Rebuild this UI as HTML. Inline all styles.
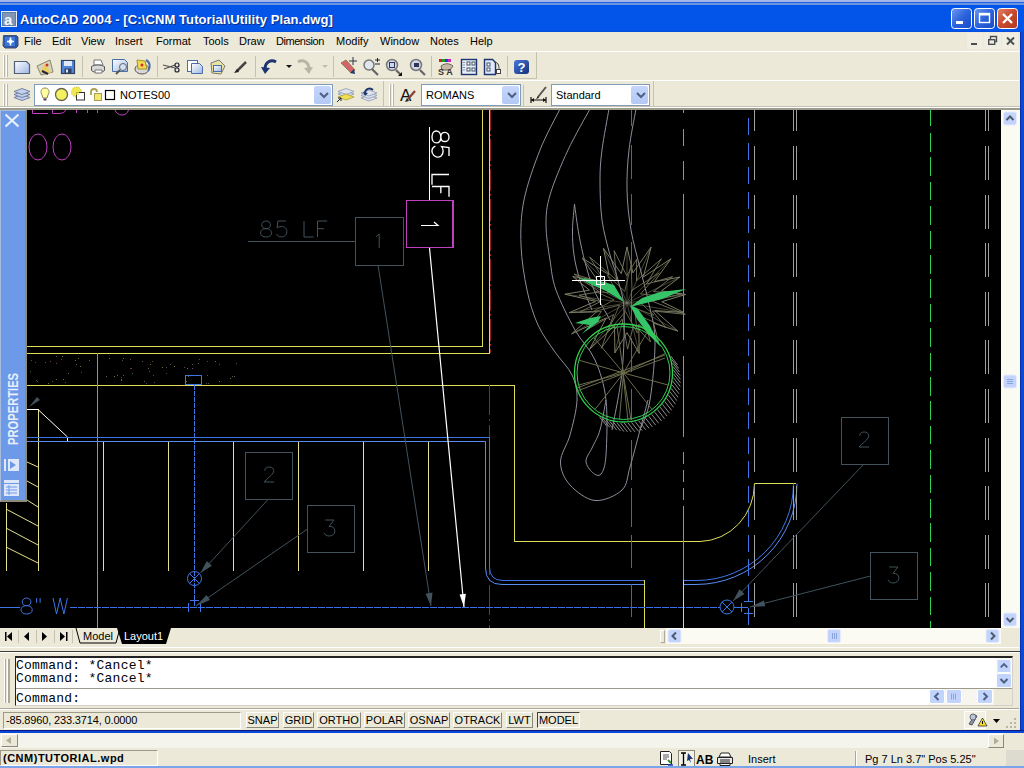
<!DOCTYPE html>
<html><head><meta charset="utf-8">
<style>
*{box-sizing:border-box;margin:0;padding:0}
html,body{width:1024px;height:768px;overflow:hidden;background:#ECE9D8;font-family:"Liberation Sans",sans-serif;font-size:11px;color:#000}
.a{position:absolute}
#title{left:0;top:0;width:1024px;height:32px;background:linear-gradient(#a3b5e8 0,#a3b5e8 2px,#1f5fe2 2px,#1f5fe2 3px,#6a96e2 3px,#6a96e2 5px,#0355ea 5px,#0355ea 31px,#0348d2 32px)}
#title .t{left:20px;top:12px;color:#fff;font-weight:bold;font-size:13px;line-height:16px;white-space:nowrap;letter-spacing:0.100px;text-shadow:1px 1px 0 #0a2a80}
#menu{left:0;top:32px;width:1019px;height:19px}
#menu span{position:absolute;top:3px;font-size:11px;line-height:13px;white-space:nowrap}
.tb{background:#ECE9D8}
.sep{position:absolute;width:1px;background:#c5c2b2;}
.combo{position:absolute;background:#fff;border:1px solid #7f9db9;font-size:11px;line-height:13px}
.combo .dd{position:absolute;right:1px;top:1px;bottom:1px;width:17px;background:linear-gradient(#c6d6fb,#b3c8f5);border-radius:2px}
#draw{left:0;top:110px;width:1001px;height:518px;background:#000}
.mono{font-family:"Liberation Mono",monospace}
.sbtn{position:absolute;top:712px;height:16px;border:1px solid;border-color:#fff #8a887a #8a887a #fff;font-size:11px;line-height:14px;text-align:center;white-space:nowrap}
</style></head><body>
<!-- TITLE BAR -->
<div id="title" class="a"><div class="a t">AutoCAD 2004 - [C:\CNM Tutorial\Utility Plan.dwg]</div></div>
<svg class="a" style="left:0;top:8px" width="20" height="42" viewBox="0 8 20 42">
<rect x="1.500" y="11.500" width="15" height="15" fill="#5f7fa8" stroke="#e8ecf4"/><rect x="3" y="13" width="12" height="12" fill="#7f96b4"/>
<text x="4" y="24.500" font-family="Liberation Sans" font-weight="bold" font-size="15" fill="#f4f6fa">a</text>
<path d="M3.500 35.500h13l1.500 1.500v9l-2 2h-11l-2-2z" fill="#2c56a8" stroke="#44506c"/><path d="M5 37h10v9h-10z" fill="#3a78d8"/>
<path d="M10.500 37.500v8M7 41.500h7" stroke="#fff" stroke-width="1.600"/><circle cx="10.500" cy="41.500" r="2" fill="#fff"/>
</svg>
<svg class="a" style="left:945px;top:4px" width="79" height="48" viewBox="945 4 79 48">
<defs><linearGradient id="gwb" x1="0" y1="0" x2="1" y2="1"><stop offset="0" stop-color="#6f9af0"/><stop offset="0.500" stop-color="#2c62dc"/><stop offset="1" stop-color="#1a4cc8"/></linearGradient>
<linearGradient id="gcl" x1="0" y1="0" x2="1" y2="1"><stop offset="0" stop-color="#e08468"/><stop offset="0.500" stop-color="#c8482c"/><stop offset="1" stop-color="#b03820"/></linearGradient></defs>
<rect x="951.500" y="8.500" width="20" height="20" rx="3" fill="url(#gwb)" stroke="#fff"/><rect x="956" y="21" width="7" height="3" fill="#fff"/>
<rect x="974.500" y="8.500" width="20" height="20" rx="3" fill="url(#gwb)" stroke="#fff"/><rect x="979.500" y="13.500" width="10" height="9" fill="none" stroke="#fff" stroke-width="1.400"/><rect x="979" y="13" width="11" height="2.500" fill="#fff"/>
<rect x="997.500" y="8.500" width="20" height="20" rx="3" fill="url(#gcl)" stroke="#fff"/><path d="M1003 14l9 9M1012 14l-9 9" stroke="#fff" stroke-width="2.400"/>
<g><rect x="967" y="33" width="16" height="16" fill="#f0eee2"/><rect x="984" y="33" width="17" height="16" fill="#f0eee2"/><rect x="1002" y="33" width="16" height="16" fill="#f0eee2"/>
<rect x="971" y="43" width="6" height="2" fill="#4a5050"/>
<path d="M990.500 39v-2.500h6v5h-2" fill="none" stroke="#4a5050" stroke-width="1.400"/><rect x="988.700" y="39.700" width="6" height="4.600" fill="none" stroke="#4a5050" stroke-width="1.400"/>
<path d="M1007 37.500l7 7M1014 37.500l-7 7" stroke="#4a5050" stroke-width="2"/></g>
</svg>
<!-- MENU -->
<div id="menu" class="a">
<span style="left:24px">File</span><span style="left:52px">Edit</span><span style="left:81px">View</span><span style="left:115px">Insert</span><span style="left:156px">Format</span><span style="left:203px">Tools</span><span style="left:239px">Draw</span><span style="left:276px;letter-spacing:-0.450px">Dimension</span><span style="left:336px">Modify</span><span style="left:380px">Window</span><span style="left:430px">Notes</span><span style="left:470px">Help</span>
</div>
<!-- TOOLBARS -->

<div class="a" style="left:0;top:51px;width:1019px;height:1px;background:#fff"></div>
<div class="a" style="left:0;top:52px;width:537px;height:27px;border-right:1px solid #c5c2b2;border-bottom:1px solid #c5c2b2;"></div>
<div class="a" style="left:3px;top:55px;width:1px;height:22px;background:#fff;box-shadow:1px 0 0 #b9b6a6, 3px 0 0 #fff, 4px 0 0 #b9b6a6"></div>
<div class="sep" style="left:82px;top:56px;height:21px"></div>
<div class="sep" style="left:157px;top:56px;height:21px"></div>
<div class="sep" style="left:255px;top:56px;height:21px"></div>
<div class="sep" style="left:333px;top:56px;height:21px"></div>
<div class="sep" style="left:431px;top:56px;height:21px"></div>
<div class="sep" style="left:507px;top:56px;height:21px"></div>
<svg class="a" style="left:0;top:52px" width="540" height="28" viewBox="0 52 540 28">
<defs>
<linearGradient id="gpaper" x1="0" y1="0" x2="1" y2="1"><stop offset="0" stop-color="#fff"/><stop offset="1" stop-color="#9db6e4"/></linearGradient>
<linearGradient id="ghelp" x1="0" y1="0" x2="1" y2="1"><stop offset="0" stop-color="#4a78d8"/><stop offset="1" stop-color="#12307a"/></linearGradient>
</defs>
<!-- new -->
<path d="M14.500 61.500h12l3 3v9h-15z" fill="url(#gpaper)" stroke="#4f6078" stroke-width="1.200"/>
<!-- open -->
<path d="M37 66l13-6 3 12-12 3z" fill="#d8d4b8" stroke="#8a866c"/><path d="M40 72l5-8 6 9z" fill="#e8d060"/><path d="M42 71l6 3" stroke="#223" stroke-width="2"/><circle cx="47" cy="65" r="1.500" fill="#d03030"/>
<!-- save -->
<rect x="61.500" y="60.500" width="13" height="13" fill="#4f86e0" stroke="#33415c" stroke-width="1.200"/><rect x="64" y="61" width="8" height="5" fill="#dfe8f8"/><rect x="64.500" y="68.500" width="7" height="5" fill="#33415c"/><rect x="66" y="69.500" width="2" height="3" fill="#dfe8f8"/>
<!-- print -->
<path d="M94 60h7l2 5h-9z" fill="#fff" stroke="#777"/><path d="M91.500 66.500c3-2 9-2 13 0v4c-4 3-9 3-13 0z" fill="#d8d8d8" stroke="#555"/><path d="M95 70h7v3h-7z" fill="#fff" stroke="#777"/>
<!-- preview -->
<path d="M112.500 59.500h12l3 3v9h-15z" fill="url(#gpaper)" stroke="#4a6ea8"/><circle cx="123" cy="67" r="3.500" fill="#cfe0f4" stroke="#666"/><path d="M120 70l-4 4" stroke="#555" stroke-width="2"/>
<!-- publish -->
<ellipse cx="142" cy="69" rx="7" ry="5" fill="#d8d8d8" stroke="#555"/><path d="M137 60l8 1 2 8-9 0z" fill="#f0dc50" stroke="#a89020"/><path d="M146 60c4 2 5 7 2 11" stroke="#4a6ea8" stroke-width="2" fill="none"/><circle cx="142" cy="65" r="1.500" fill="#d03030"/>
<!-- cut -->
<path d="M163 65l12 3M164 69l11-4" stroke="#555" stroke-width="1.200"/><circle cx="177" cy="65" r="2" fill="none" stroke="#223" stroke-width="1.200"/><circle cx="177" cy="70" r="2" fill="none" stroke="#223" stroke-width="1.200"/>
<!-- copy -->
<rect x="187.500" y="60.500" width="10" height="11" fill="#fff" stroke="#4a6ea8"/><path d="M191.500 63.500h8l3 3v7h-11z" fill="url(#gpaper)" stroke="#4a6ea8"/>
<!-- paste -->
<path d="M211 63l8-3 6 6-4 8-9-1z" fill="#e8e4a0" stroke="#777"/><rect x="213.500" y="65.500" width="8" height="6" fill="url(#gpaper)" stroke="#4a6ea8"/>
<!-- matchprop -->
<path d="M246 62l-9 9" stroke="#444" stroke-width="2.500"/><path d="M234 73l5-1-2-3z" fill="#222"/>
<!-- undo -->
<path d="M276 62c-5-3-11 0-11 7" stroke="#1c3470" stroke-width="3" fill="none"/><path d="M261 67l9 1-5 6z" fill="#1c3470"/>
<path d="M286 65h6l-3 3z" fill="#111"/>
<!-- redo -->
<path d="M298 62c5-3 11 0 11 7" stroke="#b8b5a5" stroke-width="3" fill="none"/><path d="M313 67l-9 1 5 6z" fill="#b8b5a5"/>
<path d="M322 65h6l-3 3z" fill="#c0bdad"/>
<!-- pan -->
<path d="M341 63l10 10 4-3-9-10z" fill="#d86070" stroke="#884"/><path d="M350 73l5 1-1-5z" fill="#223a70"/><path d="M349 61h8M353 57v8" stroke="#334" stroke-width="1"/>
<!-- zoom rt -->
<circle cx="369" cy="65" r="5" fill="#dfe6ee" stroke="#777" stroke-width="1.500"/><path d="M372 69l6 6" stroke="#666" stroke-width="2.200"/><path d="M375 60h5M377.500 58v4M375 64h5" stroke="#223" stroke-width="1"/>
<!-- zoom win -->
<circle cx="392" cy="65" r="5.500" fill="#cfd8ea" stroke="#777" stroke-width="1.500"/><rect x="389.500" y="62.500" width="5" height="5" fill="none" stroke="#335"/><path d="M396 70l5 5" stroke="#666" stroke-width="2.200"/><path d="M402 72v4h-4z" fill="#111"/>
<!-- zoom prev -->
<circle cx="416" cy="65" r="5.500" fill="#cfd8ea" stroke="#777" stroke-width="1.500"/><path d="M414 63h5v4h-5z" fill="#335"/><path d="M420 70l5 5" stroke="#666" stroke-width="2.200"/>
<!-- props -->
<rect x="439" y="59" width="3" height="3" fill="#d02020"/><rect x="442" y="59" width="3" height="3" fill="#20a020"/><rect x="445" y="59" width="3" height="3" fill="#2040d0"/><rect x="448" y="59" width="3" height="3" fill="#d020c0"/><path d="M441 66c4-3 8-3 12 0l-3 4-8 0z" fill="#c8b8a8" stroke="#665"/><text x="438" y="75" font-size="9" font-weight="bold" fill="#333" font-family="Liberation Sans">S A</text>
<!-- design center -->
<rect x="461.500" y="59.500" width="15" height="15" fill="#e8eef8" stroke="#1c3470" stroke-width="1.400"/><path d="M464 62v10" stroke="#1c3470" stroke-dasharray="1 1.500"/><rect x="467" y="62" width="3" height="3" fill="#fff" stroke="#456"/><rect x="472" y="62" width="3" height="3" fill="#fff" stroke="#456"/><rect x="467" y="68" width="3" height="3" fill="#fff" stroke="#456"/><rect x="472" y="68" width="3" height="3" fill="#fff" stroke="#456"/>
<!-- tool palettes -->
<path d="M484.500 59.500h8l3 3v12h-11z" fill="#dfe8f8" stroke="#1c3470" stroke-width="1.400"/><rect x="487" y="63" width="3" height="3" fill="#fff" stroke="#456"/><rect x="487" y="68" width="3" height="3" fill="#fff" stroke="#456"/><path d="M494 62c4 0 5 3 5 7" stroke="#444" fill="none"/><rect x="496.500" y="69.500" width="4" height="4" fill="#fff" stroke="#444"/>
<!-- help -->
<rect x="514" y="60" width="15" height="14" rx="3" fill="url(#ghelp)"/><text x="517.500" y="72" font-size="13" font-weight="bold" fill="#fff" font-family="Liberation Sans">?</text>
</svg>


<div class="a" style="left:0;top:80px;width:1019px;height:1px;background:#fff"></div>
<div class="a" style="left:0;top:81px;width:384px;height:27px;border-right:1px solid #c5c2b2;"></div>
<div class="a" style="left:386px;top:81px;width:268px;height:27px;border-right:1px solid #c5c2b2;"></div>
<div class="a" style="left:0;top:106px;width:1020px;height:1px;background:#c5c2b2"></div><div class="a" style="left:0;top:107px;width:1020px;height:1px;background:#fff"></div><div class="a" style="left:0;top:108px;width:1020px;height:2px;background:#9d9b8c"></div>
<div class="a" style="left:3px;top:84px;width:1px;height:22px;background:#fff;box-shadow:1px 0 0 #b9b6a6, 3px 0 0 #fff, 4px 0 0 #b9b6a6"></div>
<div class="a" style="left:389px;top:84px;width:1px;height:22px;background:#fff;box-shadow:1px 0 0 #b9b6a6, 3px 0 0 #fff, 4px 0 0 #b9b6a6"></div>
<div class="sep" style="left:523px;top:85px;height:21px"></div>
<div class="combo" style="left:34px;top:84px;width:299px;height:22px"><span class="a" style="left:85px;top:4px">NOTES00</span><div class="dd"></div></div>
<div class="combo" style="left:421px;top:84px;width:100px;height:22px"><span class="a" style="left:4px;top:4px">ROMANS</span><div class="dd"></div></div>
<div class="combo" style="left:551px;top:84px;width:99px;height:22px"><span class="a" style="left:4px;top:4px">Standard</span><div class="dd"></div></div>
<svg class="a" style="left:0;top:81px" width="660" height="28" viewBox="0 81 660 28">
<!-- layers icon -->
<g stroke="#66789c" fill="#c4d0ea" stroke-width="0.900"><path d="M14 97.500l8-3 8 3-8 3z"/><path d="M14 94.500l8-3 8 3-8 3z"/><path d="M14 91.500l8-3 8 3-8 3z"/></g>
<!-- bulb -->
<path d="M45 88c-4 0-5 4-3 7l1 3h4l1-3c2-3 1-7-3-7z" fill="#ffffa0" stroke="#888860"/><path d="M43.500 99.500h3" stroke="#445" stroke-width="2"/>
<!-- sun -->
<circle cx="61.500" cy="94.500" r="6" fill="#f4f060" stroke="#66664a" stroke-width="1.300"/>
<!-- freeze vp -->
<circle cx="76.500" cy="92" r="5" fill="#f0e850" stroke="#c8c040" stroke-dasharray="1.500 1"/><rect x="76.500" y="92.500" width="8" height="7.500" fill="#fff" stroke="#333"/><path d="M72 88h7v7h-7z" fill="#f0e850" opacity="0.700"/>
<!-- lock -->
<path d="M91 95v-3c0-4 6-4 6 0" stroke="#a8a050" stroke-width="1.800" fill="none"/><rect x="94.500" y="93.500" width="7" height="7" fill="#f0e870" stroke="#a8a050"/>
<!-- color -->
<rect x="105.500" y="90.500" width="9" height="9" fill="#fff" stroke="#000" stroke-width="1.200"/>
<!-- combo arrows -->
<g stroke="#4d6185" stroke-width="2" fill="none"><path d="M320 93l4 4 4-4"/><path d="M508 93l4 4 4-4"/><path d="M637 93l4 4 4-4"/></g>
<!-- layer btns -->
<g stroke="#8a98b0" fill="#dfe4ee" stroke-width="0.800"><path d="M338 94l8-3 8 3-8 3z"/><path d="M338 91.500l8-3 8 3-8 3z"/></g><path d="M338 97l8-3 8 3-8 3z" fill="#f0e050" stroke="#a8a040" stroke-width="0.800"/><path d="M337 102l4-4M341 98v3M341 98h-3" stroke="#223" stroke-width="1"/>
<g stroke="#8a98b0" fill="#dfe4ee" stroke-width="0.800"><path d="M361 98l8-3 8 3-8 3z"/><path d="M361 95.500l8-3 8 3-8 3z"/><path d="M361 93l8-3 8 3-8 3z"/></g><path d="M373 90c-3-3-8-1-8 3" stroke="#1c3470" stroke-width="1.800" fill="none"/><path d="M363 92l5 1-3 3z" fill="#1c3470"/>
<!-- text style -->
<text x="400" y="101" font-size="17" fill="#111" font-family="Liberation Sans">A</text><path d="M415 91l-7 8" stroke="#884030" stroke-width="2.200"/><path d="M405 102l4-1-2-3z" fill="#222"/>
<!-- dim style -->
<path d="M531 100h15M531 97v6M546 97v6" stroke="#111" stroke-width="1.200"/><path d="M531 100l3-2v4zM546 100l-3-2v4z" fill="#111"/><path d="M546 87l-8 10" stroke="#555" stroke-width="2"/><path d="M536 99l3-1-1-2z" fill="#222"/>
</svg>

<!-- DRAWING -->
<div id="draw" class="a">
<svg id="cad" width="1001" height="518" viewBox="0 110 1001 518" style="position:absolute;left:0;top:0" fill="none" stroke-width="1" shape-rendering="crispEdges">
<g stroke="#c040c0" shape-rendering="auto"><ellipse cx="38" cy="147" rx="9" ry="13"/><ellipse cx="62" cy="147" rx="9" ry="13"/>
<path d="M32.500 110V113.500H48M52.500 110V113.500H58Q65 113.500 65.500 110M76.500 110V113M87.500 110V113M97.500 110V113M115 110Q117 115 122 115Q127 115 128.500 110"/></g>
<path d="M27 346.5L482.5 346.5" stroke="#dede58" stroke-width="1" />
<path d="M482.5 109L482.5 346.5" stroke="#dede58" stroke-width="1" />
<path d="M27 353.5L489.5 353.5" stroke="#dede58" stroke-width="1" />
<path d="M489.5 109L489.5 353.5" stroke="#dede58" stroke-width="1" />
<path d="M27 385.5H514.5V541.5H700" stroke="#dede58" stroke-width="1" />
<path d="M700 541.5A56 58 0 0 0 754.5 483.500H796" stroke="#dede58" shape-rendering="auto"/>
<path d="M490.5 109L490.5 353" stroke="#902018" stroke-width="1" stroke-dasharray="22 3 2 3"/>
<path d="M489.5 385L489.5 628" stroke="#8c2820" stroke-width="1" stroke-dasharray="30 4 2 4"/>
<path d="M97.5 353L97.5 629" stroke="#30d050" stroke-width="1" />
<path d="M6.5 503L6.5 571" stroke="#e6e08c" stroke-width="1" />
<path d="M38.5 409L38.5 571" stroke="#e6e08c" stroke-width="1" />
<path d="M103.5 441L103.5 571" stroke="#e6e08c" stroke-width="1" />
<path d="M168.5 441L168.5 571" stroke="#e6e08c" stroke-width="1" />
<path d="M233.5 441L233.5 571" stroke="#e6e08c" stroke-width="1" />
<path d="M298.5 441L298.5 571" stroke="#e6e08c" stroke-width="1" />
<path d="M363.5 441L363.5 571" stroke="#e6e08c" stroke-width="1" />
<path d="M428.5 441L428.5 571" stroke="#e6e08c" stroke-width="1" />
<path d="M27 462L38 467" stroke="#e6e08c" shape-rendering="auto"/>
<path d="M27 481L38 487" stroke="#e6e08c" shape-rendering="auto"/>
<path d="M27 500L38 507" stroke="#e6e08c" shape-rendering="auto"/>
<path d="M6 509L38 526" stroke="#e6e08c" shape-rendering="auto"/>
<path d="M6 528L38 545" stroke="#e6e08c" shape-rendering="auto"/>
<path d="M6 547L38 563" stroke="#e6e08c" shape-rendering="auto"/>
<path d="M27 409.500H38L67.500 437V441" stroke="#fff" shape-rendering="auto"/>
<path d="M29 407l8-10 3 3z" fill="#41525c" stroke="none" shape-rendering="auto"/>
<g stroke="#3f76e6" shape-rendering="auto"><path d="M27 437.500H489.500V567Q489.500 580.500 503 580.500H644.500"/><path d="M27 441.500H485.500V568Q485.500 584.500 502 584.500H644.500" stroke="#5a8cf0"/>
<path d="M683 580.500H696A97 97 0 0 0 793.500 483.500"/><path d="M683 584.500H696A101 101 0 0 0 797 483.500" stroke="#5a8cf0"/></g>
<path d="M644.5 580L644.5 629" stroke="#dede58" stroke-width="1" />
<path d="M0 607.5L20 607.5" stroke="#3f76e6" stroke-width="1" />
<path d="M70 607.5L720 607.5" stroke="#3a70ea" stroke-width="1" stroke-dasharray="7 1"/>
<path d="M734 607.5L748 607.5" stroke="#3f76e6" stroke-width="1" />
<path d="M194.5 385L194.5 607" stroke="#3f76e6" stroke-width="1" stroke-dasharray="5 1"/>
<rect x="185.500" y="375.500" width="16" height="9" stroke="#3f76e6"/>
<g stroke="#3f76e6" shape-rendering="auto"><circle cx="194.5" cy="578.5" r="7"/><path d="M189.5 573.5l10 10M199.5 573.5l-10 10"/></g>
<g stroke="#3f76e6" shape-rendering="auto"><circle cx="727" cy="607" r="7"/><path d="M722 602l10 10M732 602l-10 10"/></g>
<path d="M188.500 603v9M200.500 603v9M190 600.500h9" stroke="#3f76e6" stroke-width="1" />
<path d="M741.500 603v9M744 601.500h9M744 613.500h9" stroke="#3f76e6" stroke-width="1" />
<g transform="translate(21 598)" stroke="#3f76e6" stroke-width="1" shape-rendering="auto"><path d="M0.35 0.48C0.14 0.48 0.08 0.36 0.08 0.24C0.08 0.1 0.2 0 0.35 0C0.5 0 0.62 0.1 0.62 0.24C0.62 0.36 0.56 0.48 0.35 0.48C0.1 0.48 0 0.62 0 0.75C0 0.9 0.15 1 0.35 1C0.55 1 0.7 0.9 0.7 0.75C0.7 0.62 0.6 0.48 0.35 0.48" transform="translate(0 0) scale(16)" vector-effect="non-scaling-stroke"/></g>
<g transform="translate(35 598)" stroke="#3f76e6" stroke-width="1" shape-rendering="auto"><path d="M0.1 0V0.3M0.32 0V0.3" transform="translate(0 0) scale(16)" vector-effect="non-scaling-stroke"/></g>
<g transform="translate(53 598)" stroke="#3f76e6" stroke-width="1" shape-rendering="auto"><path d="M0 0L0.22 1L0.45 0L0.68 1L0.9 0" transform="translate(0 0) scale(16)" vector-effect="non-scaling-stroke"/></g>
<path d="M683.5 109L683.5 113" stroke="#30d050" stroke-width="1" />
<path d="M683.5 129L683.5 146" stroke="#30d050" stroke-width="1" />
<path d="M683.5 161L683.5 180" stroke="#30d050" stroke-width="1" />
<path d="M683.5 194L683.5 340" stroke="#30d050" stroke-width="1" />
<path d="M683.5 356L683.5 437" stroke="#30d050" stroke-width="1" />
<path d="M683.5 437L683.5 522" stroke="#30d050" stroke-width="1" stroke-dasharray="0 15 12 6 12 6 12 6 16"/>
<path d="M683.5 522L683.5 580" stroke="#30d050" stroke-width="1" />
<path d="M683.5 580L683.5 629" stroke="#dede58" stroke-width="1" />
<path d="M631.5 109L631.5 126" stroke="#e03020" stroke-width="1" />
<path d="M631.5 145L631.5 179" stroke="#e03020" stroke-width="1" />
<path d="M631.5 194L631.5 225" stroke="#e03020" stroke-width="1" />
<path d="M631.5 242L631.5 275" stroke="#e03020" stroke-width="1" />
<path d="M631.5 290L631.5 322" stroke="#e03020" stroke-width="1" />
<path d="M631.5 338L631.5 372" stroke="#e03020" stroke-width="1" />
<path d="M631.5 389L631.5 420" stroke="#e03020" stroke-width="1" />
<path d="M631.5 440L631.5 480" stroke="#e03020" stroke-width="1" />
<path d="M631.5 488L631.5 527" stroke="#e03020" stroke-width="1" />
<path d="M631.5 535L631.5 568" stroke="#e03020" stroke-width="1" />
<path d="M631.5 584L631.5 617" stroke="#e03020" stroke-width="1" />
<path d="M748.5 118L748.5 629" stroke="#3f76e6" stroke-width="1" stroke-dasharray="17 7.500"/>
<path d="M754.5 109L754.5 131" stroke="#a0a0a0" stroke-width="1" />
<path d="M754.5 146L754.5 629" stroke="#a0a0a0" stroke-width="1" stroke-dasharray="34 14.600"/>
<path d="M793.5 109L793.5 131" stroke="#a0a0a0" stroke-width="1" />
<path d="M793.5 146L793.5 629" stroke="#a0a0a0" stroke-width="1" stroke-dasharray="34 14.600"/>
<path d="M796.5 109L796.5 131" stroke="#a0a0a0" stroke-width="1" />
<path d="M796.5 146L796.5 629" stroke="#a0a0a0" stroke-width="1" stroke-dasharray="34 14.600"/>
<path d="M985.5 109L985.5 131" stroke="#a0a0a0" stroke-width="1" />
<path d="M985.5 146L985.5 629" stroke="#a0a0a0" stroke-width="1" stroke-dasharray="34 14.600"/>
<path d="M988.5 109L988.5 131" stroke="#a0a0a0" stroke-width="1" />
<path d="M988.5 146L988.5 629" stroke="#a0a0a0" stroke-width="1" stroke-dasharray="34 14.600"/>
<path d="M930.5 109L930.5 126" stroke="#30d050" stroke-width="1" />
<path d="M930.5 133L930.5 629" stroke="#30d050" stroke-width="1" stroke-dasharray="18.500 5.900"/>
<path d="M560 109C556.7 115.8 546 134.8 540 150C534 165.2 527.2 184.2 524 200C520.8 215.8 520.5 230 521 245C521.5 260 524.2 276.7 527 290C529.8 303.3 533.3 314.7 538 325C542.7 335.3 549.3 343.7 555 352C560.7 360.3 568.3 367 572 375C575.7 383 577.3 390 577 400C576.7 410 572.8 424.7 570 435C567.2 445.3 560.5 453.7 560.5 462C560.5 470.3 564.2 478.6 570 485C575.8 491.4 586.3 499.7 595 500.5C603.7 501.3 616.2 495.6 622 490C627.8 484.4 627 477 630 467C633 457 637 441.2 640 430C643 418.8 646.7 405 648 400" stroke="#8e8e9c" stroke-width="1" shape-rendering="auto"/>
<path d="M590 109C586.3 115.8 574.7 135.7 568 150C561.3 164.3 553.7 182.5 550 195C546.3 207.5 546 214.2 546 225C546 235.8 548.3 249.2 550 260C551.7 270.8 551.8 278.3 556 290C560.2 301.7 568.5 318.3 575 330C581.5 341.7 589.8 348.3 595 360C600.2 371.7 604.2 384.2 606 400C607.8 415.8 606.8 442.7 606 455C605.2 467.3 603.2 471.1 601 474C598.8 476.9 595 474.7 592.5 472.5C590 470.3 586 465.2 586 461C586 456.8 590.2 452.2 592.5 447C594.8 441.8 597.8 437.8 600 430C602.2 422.2 605 405 606 400" stroke="#8e8e9c" stroke-width="1" shape-rendering="auto"/>
<path d="M609 109C607.8 115.8 603.5 138.2 602 150C600.5 161.8 600 168.3 600 180C600 191.7 600.3 207.5 602 220C603.7 232.5 607.3 245 610 255C612.7 265 615.7 270.8 618 280C620.3 289.2 623.3 294.7 624 310C624.7 325.3 624 352 622 372C620 392 613.7 420.3 612 430" stroke="#8e8e9c" stroke-width="1" shape-rendering="auto"/>
<path d="M636 109C634.8 115.8 630.5 136.5 629 150C627.5 163.5 626.7 176.7 627 190C627.3 203.3 628.8 217 631 230C633.2 243 637.2 256.3 640 268C642.8 279.7 645.5 288 648 300C650.5 312 654.7 323.3 655 340C655.3 356.7 652.5 385 650 400C647.5 415 641.7 425 640 430" stroke="#8e8e9c" stroke-width="1" shape-rendering="auto"/>
<path d="M574.5 204C574.2 208.3 572.6 221.5 572.5 230C572.4 238.5 572.8 246.7 574 255C575.2 263.3 577 270.8 580 280C583 289.2 590 305 592 310" stroke="#8e8e9c" stroke-width="1" shape-rendering="auto"/>
<path d="M574.5 204C575.2 209.2 577.2 225.3 579 235C580.8 244.7 582.5 252.8 585 262C587.5 271.2 589.8 280.3 594 290C598.2 299.7 607.3 315 610 320" stroke="#8e8e9c" stroke-width="1" shape-rendering="auto"/>
<path d="M627 246.9L632.9 272.9L651.1 247.1L643.3 277L671 258.8L654.3 281.8L679.9 277.1L661.4 290.9L685.6 294.5L661.8 301.7L684 312.5L654.9 310.6L677.9 331.1L653.4 323.1L658.5 341.5L638.8 324.4L639.2 353.4L627 332.7L614.9 352.9L614.5 325.8L589.6 349.3L606.3 317.9L571.6 333.9L597.1 311.4L569.1 312.7L595.6 301.4L564.9 294.2L589.4 290.1L572.7 276.5L597.9 280.7L582.1 258L609 274.7L603.4 248.2L621.3 273.7Z" stroke="#7c7c64" shape-rendering="auto" opacity="1"/>
<path d="M627 303L627 246.9M627 303L651.1 247.1M627 303L671 258.8M627 303L679.9 277.1M627 303L685.6 294.5M627 303L684 312.5M627 303L677.9 331.1M627 303L658.5 341.5M627 303L639.2 353.4M627 303L614.9 352.9M627 303L589.6 349.3M627 303L571.6 333.9M627 303L569.1 312.7M627 303L564.9 294.2M627 303L572.7 276.5M627 303L582.1 258M627 303L603.4 248.2" stroke="#7c7c64" shape-rendering="auto" opacity="0.550"/>
<path d="M636.6 259.3L636.5 280.8L661.4 258.8L646.3 284.2L672.6 276.6L653.5 291.6L682 293.7L651.7 301L685.4 314.3L652.4 310.9L665.8 327.5L643.6 317.6L650.5 341.9L633.7 324.3L627.6 349.1L622.1 319.2L601.3 348.3L613.7 314.5L586.7 329.8L601.4 311.6L579.5 312.3L600.3 301.6L579 295.2L599.5 291.8L574.1 274.1L606.2 283.7L589.7 257.1L616.6 280.1L614.1 250.6L626.7 275.7Z" stroke="#7c7c64" shape-rendering="auto" opacity="0.85"/>
<path d="M631.1 264.9L632 290.3L659.3 272.8L640.5 293.9L666.5 296.5L639.5 301.9L654 315.2L634.4 308.1L637.4 333.1L625.5 311.5L607.5 332.7L619.5 305.1L592.1 312.1L614.1 299.8L595.5 291.6L617.6 293.3L607.3 274.9L624.7 291.4Z" stroke="#6c6c4c" shape-rendering="auto" opacity="0.9"/>
<path d="M579 278L600 281L614 285L624 302L606 291L592 285Z" fill="#36c468" stroke="none" shape-rendering="auto"/>
<path d="M630 307L642 298L660 292L686 289L662 299L646 303Z" fill="#36c468" stroke="none" shape-rendering="auto"/>
<path d="M630 305L638 309L650 326L661 347L648 334L637 319Z" fill="#36c468" stroke="none" shape-rendering="auto"/>
<path d="M575 323L590 318L601 316L598 322L582 334L590 325Z" fill="#36c468" stroke="none" shape-rendering="auto"/>
<g stroke="#30d050" shape-rendering="auto"><circle cx="623.5" cy="373" r="49" stroke-width="1.300"/><circle cx="623.5" cy="373" r="46.500"/></g>
<path d="M623.5 373L668.9 385.2" stroke="#6c6c4c" shape-rendering="auto"/>
<path d="M623.5 373L652.4 410" stroke="#6c6c4c" shape-rendering="auto"/>
<path d="M623.5 373L619.4 419.8" stroke="#6c6c4c" shape-rendering="auto"/>
<path d="M623.5 373L594.6 410" stroke="#6c6c4c" shape-rendering="auto"/>
<path d="M623.5 373L578.1 385.2" stroke="#6c6c4c" shape-rendering="auto"/>
<path d="M623.5 373L578.3 360" stroke="#6c6c4c" shape-rendering="auto"/>
<path d="M623.5 373L593.3 337" stroke="#6c6c4c" shape-rendering="auto"/>
<path d="M623.5 373L617 326.5" stroke="#6c6c4c" shape-rendering="auto"/>
<path d="M623.5 373L647 332.3" stroke="#6c6c4c" shape-rendering="auto"/>
<path d="M623.5 373L666.1 353.1" stroke="#6c6c4c" shape-rendering="auto"/>
<path d="M577 388L665 355M577 391L665 358" stroke="#6c6c4c" shape-rendering="auto"/>
<path d="M623 373L631 420M623 373L628 421" stroke="#6c6c4c" shape-rendering="auto"/>
<path d="M670.5 355.9L677.5 364.9" stroke="#8a8a8a" shape-rendering="auto"/>
<path d="M671.6 359.4L678.6 368.4" stroke="#8a8a8a" shape-rendering="auto"/>
<path d="M672.5 362.9L679.5 371.9" stroke="#8a8a8a" shape-rendering="auto"/>
<path d="M673.1 366.6L680.1 375.6" stroke="#8a8a8a" shape-rendering="auto"/>
<path d="M673.4 370.2L680.4 379.2" stroke="#8a8a8a" shape-rendering="auto"/>
<path d="M673.5 373.9L680.5 382.9" stroke="#8a8a8a" shape-rendering="auto"/>
<path d="M673.3 377.5L680.3 386.5" stroke="#8a8a8a" shape-rendering="auto"/>
<path d="M672.8 381.2L679.8 390.2" stroke="#8a8a8a" shape-rendering="auto"/>
<path d="M672.1 384.8L679.1 393.8" stroke="#8a8a8a" shape-rendering="auto"/>
<path d="M671.1 388.3L678.1 397.3" stroke="#8a8a8a" shape-rendering="auto"/>
<path d="M669.9 391.7L676.9 400.7" stroke="#8a8a8a" shape-rendering="auto"/>
<path d="M668.4 395.1L675.4 404.1" stroke="#8a8a8a" shape-rendering="auto"/>
<path d="M666.6 398.3L673.6 407.3" stroke="#8a8a8a" shape-rendering="auto"/>
<path d="M664.7 401.4L671.7 410.4" stroke="#8a8a8a" shape-rendering="auto"/>
<path d="M662.5 404.3L669.5 413.3" stroke="#8a8a8a" shape-rendering="auto"/>
<path d="M660.1 407.1L667.1 416.1" stroke="#8a8a8a" shape-rendering="auto"/>
<path d="M657.5 409.7L664.5 418.7" stroke="#8a8a8a" shape-rendering="auto"/>
<path d="M654.7 412.1L661.7 421.1" stroke="#8a8a8a" shape-rendering="auto"/>
<path d="M651.7 414.3L658.7 423.3" stroke="#8a8a8a" shape-rendering="auto"/>
<path d="M648.7 416.2L655.7 425.2" stroke="#8a8a8a" shape-rendering="auto"/>
<path d="M645.4 417.9L652.4 426.9" stroke="#8a8a8a" shape-rendering="auto"/>
<path d="M642.1 419.4L649.1 428.4" stroke="#8a8a8a" shape-rendering="auto"/>
<path d="M638.6 420.7L645.6 429.7" stroke="#8a8a8a" shape-rendering="auto"/>
<path d="M635.1 421.6L642.1 430.6" stroke="#8a8a8a" shape-rendering="auto"/>
<path d="M631.5 422.4L638.5 431.4" stroke="#8a8a8a" shape-rendering="auto"/>
<path d="M627.9 422.8L634.9 431.8" stroke="#8a8a8a" shape-rendering="auto"/>
<path d="M624.2 423L631.2 432" stroke="#8a8a8a" shape-rendering="auto"/>
<path d="M620.5 422.9L627.5 431.9" stroke="#8a8a8a" shape-rendering="auto"/>
<path d="M616.9 422.6L623.9 431.6" stroke="#8a8a8a" shape-rendering="auto"/>
<path d="M613.3 421.9L620.3 430.9" stroke="#8a8a8a" shape-rendering="auto"/>
<path d="M609.7 421.1L616.7 430.1" stroke="#8a8a8a" shape-rendering="auto"/>
<path d="M606.2 419.9L613.2 428.9" stroke="#8a8a8a" shape-rendering="auto"/>
<path d="M602.8 418.5L609.8 427.5" stroke="#8a8a8a" shape-rendering="auto"/>
<path d="M599.6 416.9L606.6 425.9" stroke="#8a8a8a" shape-rendering="auto"/>
<rect x="355.5" y="217.5" width="47.5" height="47.5" stroke="#41525c" stroke-width="1"/>
<g transform="translate(375 234)" stroke="#41525c" stroke-width="1" shape-rendering="auto"><path d="M0.08 0.2L0.3 0V1" transform="translate(0 0) scale(14)" vector-effect="non-scaling-stroke"/></g>
<rect x="245.5" y="452.5" width="47" height="47" stroke="#41525c" stroke-width="1"/>
<g transform="translate(264 467)" stroke="#41525c" stroke-width="1" shape-rendering="auto"><path d="M0.05 0.25C0.05 0.05 0.2 0 0.35 0C0.55 0 0.65 0.12 0.65 0.25C0.65 0.45 0.4 0.6 0 1H0.68" transform="translate(0 0) scale(15)" vector-effect="non-scaling-stroke"/></g>
<rect x="307.5" y="505.5" width="47" height="47" stroke="#41525c" stroke-width="1"/>
<g transform="translate(324 520)" stroke="#41525c" stroke-width="1" shape-rendering="auto"><path d="M0.08 0H0.62L0.32 0.4C0.55 0.38 0.68 0.52 0.68 0.7C0.68 0.9 0.5 1 0.33 1C0.18 1 0.05 0.93 0 0.8" transform="translate(0 0) scale(16)" vector-effect="non-scaling-stroke"/></g>
<rect x="841.5" y="417.5" width="47" height="47" stroke="#41525c" stroke-width="1"/>
<g transform="translate(859 432)" stroke="#41525c" stroke-width="1" shape-rendering="auto"><path d="M0.05 0.25C0.05 0.05 0.2 0 0.35 0C0.55 0 0.65 0.12 0.65 0.25C0.65 0.45 0.4 0.6 0 1H0.68" transform="translate(0 0) scale(15)" vector-effect="non-scaling-stroke"/></g>
<rect x="870.5" y="552.5" width="47" height="47" stroke="#41525c" stroke-width="1"/>
<g transform="translate(888 567)" stroke="#41525c" stroke-width="1" shape-rendering="auto"><path d="M0.08 0H0.62L0.32 0.4C0.55 0.38 0.68 0.52 0.68 0.7C0.68 0.9 0.5 1 0.33 1C0.18 1 0.05 0.93 0 0.8" transform="translate(0 0) scale(16)" vector-effect="non-scaling-stroke"/></g>
<path d="M247.5 241.5L355 241.5" stroke="#41525c" stroke-width="1" />
<g transform="translate(260.5 221)" stroke="#41525c" stroke-width="1" shape-rendering="auto"><path d="M0.35 0.48C0.14 0.48 0.08 0.36 0.08 0.24C0.08 0.1 0.2 0 0.35 0C0.5 0 0.62 0.1 0.62 0.24C0.62 0.36 0.56 0.48 0.35 0.48C0.1 0.48 0 0.62 0 0.75C0 0.9 0.15 1 0.35 1C0.55 1 0.7 0.9 0.7 0.75C0.7 0.62 0.6 0.48 0.35 0.48" transform="translate(0 0) scale(16)" vector-effect="non-scaling-stroke"/><path d="M0.62 0H0.12L0.07 0.43C0.2 0.33 0.45 0.3 0.6 0.45C0.75 0.62 0.68 0.9 0.45 0.98C0.28 1.03 0.1 0.97 0.03 0.8" transform="translate(15.5 0) scale(16)" vector-effect="non-scaling-stroke"/></g>
<g transform="translate(304 221)" stroke="#41525c" stroke-width="1" shape-rendering="auto"><path d="M0 0V1H0.6" transform="translate(0 0) scale(16)" vector-effect="non-scaling-stroke"/><path d="M0 1V0H0.6M0 0.48H0.4" transform="translate(13.5 0) scale(16)" vector-effect="non-scaling-stroke"/></g>
<path d="M378 265L431 606" stroke="#41525c" stroke-width="1" shape-rendering="auto"/>
<path d="M431 606L425.5 593.7L432.5 592.6Z" fill="#41525c" stroke="none" shape-rendering="auto"/>
<path d="M268 499.5L200.5 573" stroke="#41525c" stroke-width="1" shape-rendering="auto"/>
<path d="M200.5 573L206.7 561.1L211.9 565.8Z" fill="#41525c" stroke="none" shape-rendering="auto"/>
<path d="M307.5 529L196 606" stroke="#41525c" stroke-width="1" shape-rendering="auto"/>
<path d="M196 606L206.6 595L210 599.9Z" fill="#41525c" stroke="none" shape-rendering="auto"/>
<path d="M864 464L733 601" stroke="#41525c" stroke-width="1" shape-rendering="auto"/>
<path d="M733 601L739.5 589.2L744.5 594Z" fill="#41525c" stroke="none" shape-rendering="auto"/>
<path d="M870.5 576L750 607" stroke="#41525c" stroke-width="1" shape-rendering="auto"/>
<path d="M750 607L763.8 600.4L765.3 606.2Z" fill="#41525c" stroke="none" shape-rendering="auto"/>
<rect x="406.500" y="200.500" width="46.500" height="47" stroke="#c040c0" stroke-width="1.300"/>
<path d="M429.5 127L429.5 200" stroke="#fff" stroke-width="1" />
<path d="M429.5 248L464 607" stroke="#fff" stroke-width="1.2" shape-rendering="auto"/>
<path d="M464 607L459.6 594.4L465.9 593.8Z" fill="#fff" stroke="none" shape-rendering="auto"/>
<g transform="translate(432 131) rotate(90) translate(0 -17)" stroke="#fff" shape-rendering="auto">
<path d="M0.35 0.48C0.14 0.48 0.08 0.36 0.08 0.24C0.08 0.1 0.2 0 0.35 0C0.5 0 0.62 0.1 0.62 0.24C0.62 0.36 0.56 0.48 0.35 0.48C0.1 0.48 0 0.62 0 0.75C0 0.9 0.15 1 0.35 1C0.55 1 0.7 0.9 0.7 0.75C0.7 0.62 0.6 0.48 0.35 0.48" transform="translate(0 0) scale(17 17)" vector-effect="non-scaling-stroke" stroke-width="1.350"/>
<path d="M0.62 0H0.12L0.07 0.43C0.2 0.33 0.45 0.3 0.6 0.45C0.75 0.62 0.68 0.9 0.45 0.98C0.28 1.03 0.1 0.97 0.03 0.8" transform="translate(14.5 0) scale(17 17)" vector-effect="non-scaling-stroke" stroke-width="1.350"/>
<path d="M0 0V1H0.6" transform="translate(43.5 0) scale(17 17)" vector-effect="non-scaling-stroke" stroke-width="1.350"/>
<path d="M0 1V0H0.6M0 0.48H0.4" transform="translate(55.5 0) scale(17 17)" vector-effect="non-scaling-stroke" stroke-width="1.350"/>
</g>
<path d="M421 225.500H438L434 222" stroke="#fff" stroke-width="1.200" shape-rendering="auto"/>
<path d="M572 280.5L625 280.5" stroke="#fff" stroke-width="1" />
<path d="M600.5 256L600.5 305" stroke="#fff" stroke-width="1" />
<rect x="596.500" y="276.500" width="8" height="8" stroke="#fff"/>
<rect x="45" y="362" width="1" height="1" fill="#406040" stroke="none"/>
<rect x="63" y="379" width="1" height="1" fill="#707040" stroke="none"/>
<rect x="131" y="368" width="1" height="1" fill="#704040" stroke="none"/>
<rect x="50" y="361" width="1" height="1" fill="#704040" stroke="none"/>
<rect x="132" y="373" width="1" height="1" fill="#406040" stroke="none"/>
<rect x="65" y="382" width="1" height="1" fill="#704040" stroke="none"/>
<rect x="170" y="364" width="1" height="1" fill="#704040" stroke="none"/>
<rect x="121" y="377" width="1" height="1" fill="#704040" stroke="none"/>
<rect x="89" y="360" width="1" height="1" fill="#705070" stroke="none"/>
<rect x="75" y="360" width="1" height="1" fill="#707040" stroke="none"/>
<rect x="198" y="363" width="1" height="1" fill="#705070" stroke="none"/>
<rect x="154" y="382" width="1" height="1" fill="#404870" stroke="none"/>
<rect x="76" y="364" width="1" height="1" fill="#406040" stroke="none"/>
<rect x="31" y="360" width="1" height="1" fill="#704040" stroke="none"/>
<rect x="166" y="367" width="1" height="1" fill="#404870" stroke="none"/>
<rect x="174" y="366" width="1" height="1" fill="#707040" stroke="none"/>
<rect x="206" y="383" width="1" height="1" fill="#404870" stroke="none"/>
<rect x="188" y="376" width="1" height="1" fill="#705070" stroke="none"/>
<rect x="146" y="383" width="1" height="1" fill="#404870" stroke="none"/>
<rect x="130" y="368" width="1" height="1" fill="#704040" stroke="none"/>
<rect x="130" y="359" width="1" height="1" fill="#704040" stroke="none"/>
<rect x="192" y="368" width="1" height="1" fill="#705070" stroke="none"/>
<rect x="78" y="358" width="1" height="1" fill="#707040" stroke="none"/>
<rect x="142" y="361" width="1" height="1" fill="#705070" stroke="none"/>
<rect x="117" y="375" width="1" height="1" fill="#705070" stroke="none"/>
<rect x="56" y="356" width="1" height="1" fill="#404870" stroke="none"/>
<rect x="68" y="373" width="1" height="1" fill="#705070" stroke="none"/>
<rect x="123" y="375" width="1" height="1" fill="#705070" stroke="none"/>
<rect x="48" y="383" width="1" height="1" fill="#707040" stroke="none"/>
<rect x="187" y="368" width="1" height="1" fill="#707040" stroke="none"/>
<rect x="192" y="364" width="1" height="1" fill="#406040" stroke="none"/>
<rect x="184" y="367" width="1" height="1" fill="#704040" stroke="none"/>
<rect x="61" y="359" width="1" height="1" fill="#704040" stroke="none"/>
<rect x="149" y="371" width="1" height="1" fill="#704040" stroke="none"/>
<rect x="109" y="358" width="1" height="1" fill="#707040" stroke="none"/>
<rect x="56" y="379" width="1" height="1" fill="#406040" stroke="none"/>
<rect x="219" y="364" width="1" height="1" fill="#704040" stroke="none"/>
<rect x="207" y="361" width="1" height="1" fill="#404870" stroke="none"/>
<rect x="35" y="362" width="1" height="1" fill="#404870" stroke="none"/>
<rect x="122" y="360" width="1" height="1" fill="#404870" stroke="none"/>
<rect x="36" y="380" width="1" height="1" fill="#404870" stroke="none"/>
<rect x="106" y="376" width="1" height="1" fill="#705070" stroke="none"/>
<rect x="208" y="383" width="1" height="1" fill="#406040" stroke="none"/>
<rect x="162" y="367" width="1" height="1" fill="#707040" stroke="none"/>
<rect x="121" y="380" width="1" height="1" fill="#707040" stroke="none"/>
<rect x="166" y="373" width="1" height="1" fill="#404870" stroke="none"/>
<rect x="114" y="376" width="1" height="1" fill="#707040" stroke="none"/>
<rect x="186" y="381" width="1" height="1" fill="#707040" stroke="none"/>
<rect x="236" y="363" width="1" height="1" fill="#704040" stroke="none"/>
<rect x="219" y="381" width="1" height="1" fill="#707040" stroke="none"/>
<rect x="81" y="372" width="1" height="1" fill="#704040" stroke="none"/>
<rect x="121" y="379" width="1" height="1" fill="#705070" stroke="none"/>
<rect x="37" y="381" width="1" height="1" fill="#406040" stroke="none"/>
<rect x="150" y="364" width="1" height="1" fill="#707040" stroke="none"/>
<rect x="207" y="375" width="1" height="1" fill="#406040" stroke="none"/>
<rect x="144" y="381" width="1" height="1" fill="#406040" stroke="none"/>
<rect x="123" y="358" width="1" height="1" fill="#707040" stroke="none"/>
<rect x="56" y="363" width="1" height="1" fill="#704040" stroke="none"/>
<rect x="80" y="366" width="1" height="1" fill="#707040" stroke="none"/>
<rect x="153" y="375" width="1" height="1" fill="#404870" stroke="none"/>
<rect x="30" y="371" width="1" height="1" fill="#406040" stroke="none"/>
<rect x="234" y="376" width="1" height="1" fill="#705070" stroke="none"/>
<rect x="199" y="359" width="1" height="1" fill="#704040" stroke="none"/>
<rect x="230" y="378" width="1" height="1" fill="#707040" stroke="none"/>
<rect x="152" y="361" width="1" height="1" fill="#704040" stroke="none"/>
<rect x="232" y="376" width="1" height="1" fill="#406040" stroke="none"/>
<rect x="52" y="381" width="1" height="1" fill="#704040" stroke="none"/>
<rect x="148" y="368" width="1" height="1" fill="#705070" stroke="none"/>
<rect x="215" y="361" width="1" height="1" fill="#707040" stroke="none"/>
<rect x="62" y="356" width="1" height="1" fill="#707040" stroke="none"/>
</svg>
</div>

<!-- properties palette -->
<div class="a" style="left:0;top:110px;width:27px;height:392px;background:#6d9ae8;border-right:2px solid #8c8c78;border-bottom:2px solid #8c8c78;border-left:1px solid #a8bce0;border-top:1px solid #a8bce0"></div>
<svg class="a" style="left:0;top:109px" width="26" height="394" viewBox="0 109 26 394">
<path d="M5.500 114.500l13 12M18.500 114.500l-13 12" stroke="#e8eefc" stroke-width="2.200"/>
<text transform="translate(17.500 445) rotate(-90) scale(0.800 1)" font-family="Liberation Sans" font-weight="bold" font-size="14" fill="#e8eefc">PROPERTIES</text>
<g fill="#dfe8fa"><rect x="4" y="459" width="2" height="12"/><path d="M8 459h11v12h-11z"/><path d="M10 461l6 4-6 4z" fill="#6d9ae8"/>
<rect x="4" y="480" width="15" height="3"/><rect x="4" y="484" width="15" height="12"/></g>
<path d="M6 487h11M6 490h11M6 493h11M9 485v10" stroke="#6d9ae8" stroke-width="1"/>
</svg>
<!-- BOTTOM -->

<div class="a" style="left:0;top:628px;width:1020px;height:105px;background:#ECE9D8"></div>
<!-- tabs row -->
<svg class="a" style="left:0;top:628px" width="180" height="17" viewBox="0 628 180 17">
<g fill="#000"><path d="M5 632h1.500v9h-1.500zM12 632v9l-5-4.500z"/><path d="M29 632v9l-5-4.500z"/><path d="M42 632v9l5-4.500z"/><path d="M66 632h1.500v9h-1.500zM60 632v9l5-4.500z"/></g>
<path d="M18.500 630v13M36.500 630v13M54.500 630v13M72.500 630v13" stroke="#c5c2b2"/>
<path d="M76 628l4 15h36l4-15" fill="#ECE9D8" stroke="#000"/>
<path d="M117 628h54l-5 16h-44z" fill="#000"/>
<text x="83" y="640" font-size="11" font-family="Liberation Sans" fill="#000">Model</text>
<text x="124" y="640" font-size="11" font-family="Liberation Sans" fill="#fff">Layout1</text>
</svg>
<!-- h scrollbar of drawing -->
<div class="a" style="left:666px;top:628px;width:335px;height:16px;background:#fbfaf3"></div>
<div class="a" style="left:660px;top:630px;width:5px;height:13px;border:1px solid;border-color:#fff #aca899 #aca899 #fff"></div>
<svg class="a" style="left:667px;top:629px" width="15" height="14" viewBox="0 0 14 14"><rect x="0.500" y="0.500" width="13" height="13" rx="2" fill="#c3d3fb" stroke="#e4ecfd"/><path d="M8.500 3.500l-3.500 3.500 3.500 3.500" stroke="#4d5a6e" stroke-width="2" fill="none"/></svg><svg class="a" style="left:826px;top:629px" width="16" height="14" viewBox="0 0 14 14"><rect x="0.500" y="0.500" width="13" height="13" rx="2" fill="#c3d3fb" stroke="#e4ecfd"/><path d="M5.500 4v6M7.500 4v6M9.500 4v6" stroke="#8aa4e0" stroke-width="1"/></svg><svg class="a" style="left:985px;top:629px" width="15" height="14" viewBox="0 0 14 14"><rect x="0.500" y="0.500" width="13" height="13" rx="2" fill="#c3d3fb" stroke="#e4ecfd"/><path d="M5.500 3.500l3.500 3.500-3.500 3.500" stroke="#4d5a6e" stroke-width="2" fill="none"/></svg>
<!-- v scrollbar of drawing -->
<div class="a" style="left:1001px;top:110px;width:19px;height:518px;background:#fbfaf3"></div>
<svg class="a" style="left:1003px;top:111px" width="14" height="15" viewBox="0 0 14 14"><rect x="0.500" y="0.500" width="13" height="13" rx="2" fill="#c3d3fb" stroke="#e4ecfd"/><path d="M3.500 8.500l3.500-3.500 3.500 3.500" stroke="#4d5a6e" stroke-width="2" fill="none"/></svg><svg class="a" style="left:1003px;top:374px" width="14" height="15" viewBox="0 0 14 14"><rect x="0.500" y="0.500" width="13" height="13" rx="2" fill="#c3d3fb" stroke="#e4ecfd"/><path d="M4 5h6M4 7h6M4 9h6" stroke="#8aa4e0" stroke-width="1"/></svg><svg class="a" style="left:1003px;top:612px" width="14" height="15" viewBox="0 0 14 14"><rect x="0.500" y="0.500" width="13" height="13" rx="2" fill="#c3d3fb" stroke="#e4ecfd"/><path d="M3.500 5.500l3.500 3.500 3.500-3.500" stroke="#4d5a6e" stroke-width="2" fill="none"/></svg>
<div class="a" style="left:1001px;top:628px;width:19px;height:17px;background:#ECE9D8"></div>
<!-- separator lines -->
<div class="a" style="left:0;top:647px;width:1019px;height:1px;background:#fff"></div>
<div class="a" style="left:0;top:651px;width:1020px;height:1px;background:#3c3c38"></div>
<div class="a" style="left:0;top:652px;width:1020px;height:1px;background:#fff"></div>
<!-- command window -->
<div class="a" style="left:4px;top:659px;width:2px;height:44px;background:#fff;border-right:1px solid #aca899;box-shadow:4px 0 0 #aca899, 3px 0 0 #fff"></div>
<div class="a" style="left:15px;top:656px;width:998px;height:50px;background:#fff;border:1px solid;border-color:#222 #d4d0c8 #d4d0c8 #222;border-top-width:2px"></div>
<div class="a" style="left:16px;top:688px;width:996px;height:1px;background:#9c9a8c"></div>
<div class="a mono" style="left:16px;top:659px;font-size:13px;line-height:13px;white-space:pre;letter-spacing:0.250px">Command: *Cancel*
Command: *Cancel*</div>
<div class="a mono" style="left:16px;top:692px;font-size:13px;line-height:13px;white-space:pre;letter-spacing:0.250px">Command:</div>
<div class="a" style="left:996px;top:658px;width:16px;height:30px;background:#f6f5ee"></div>
<svg class="a" style="left:996px;top:659px" width="16" height="14" viewBox="0 0 16 15"><rect x="0.500" y="0.500" width="15" height="14" rx="2" fill="#c2d3fc" stroke="#fff"/><path d="M4.500 9l3.500-3.500 3.500 3.500" stroke="#4d6185" stroke-width="2" fill="none"/></svg><svg class="a" style="left:996px;top:673px" width="16" height="15" viewBox="0 0 16 15"><rect x="0.500" y="0.500" width="15" height="14" rx="2" fill="#c2d3fc" stroke="#fff"/><path d="M4.500 6l3.500 3.500 3.500-3.500" stroke="#4d6185" stroke-width="2" fill="none"/></svg>
<div class="a" style="left:929px;top:689px;width:65px;height:16px;background:#f6f5ee"></div><div class="a" style="left:994px;top:689px;width:18px;height:16px;background:#ECE9D8"></div>
<svg class="a" style="left:929px;top:689px" width="16" height="15" viewBox="0 0 16 15"><rect x="0.500" y="0.500" width="15" height="14" rx="2" fill="#c2d3fc" stroke="#fff"/><path d="M9.500 4l-3.500 3.500 3.500 3.500" stroke="#4d6185" stroke-width="2" fill="none"/></svg><svg class="a" style="left:946px;top:689px" width="16" height="15" viewBox="0 0 16 15"><rect x="0.500" y="0.500" width="15" height="14" rx="2" fill="#c2d3fc" stroke="#fff"/><path d="M5.500 4.500v6M7.500 4.500v6M9.500 4.500v6" stroke="#8aa4e0" stroke-width="1"/></svg><svg class="a" style="left:977px;top:689px" width="16" height="15" viewBox="0 0 16 15"><rect x="0.500" y="0.500" width="15" height="14" rx="2" fill="#c2d3fc" stroke="#fff"/><path d="M6.500 4l3.500 3.500-3.500 3.500" stroke="#4d6185" stroke-width="2" fill="none"/></svg>
<!-- status bar -->
<div class="a" style="left:0;top:708px;width:1019px;height:1px;background:#aca899"></div>
<div class="a" style="left:0;top:709px;width:1019px;height:1px;background:#fff"></div>
<div class="a" style="left:3px;top:712px;width:238px;height:17px;border:1px solid;border-color:#9d9a8a #fff #fff #9d9a8a"><span class="a" style="left:2px;top:1px;font-size:11px;line-height:13px;white-space:nowrap;letter-spacing:-0.150px">-85.8960, 233.3714, 0.0000</span></div>
<div class="sbtn" style="left:246px;width:33px;border-color:#fff #8a887a #8a887a #fff">SNAP</div><div class="sbtn" style="left:283px;width:31px;border-color:#fff #8a887a #8a887a #fff">GRID</div><div class="sbtn" style="left:317px;width:44px;border-color:#fff #8a887a #8a887a #fff">ORTHO</div><div class="sbtn" style="left:364px;width:41px;border-color:#fff #8a887a #8a887a #fff">POLAR</div><div class="sbtn" style="left:408px;width:42px;border-color:#fff #8a887a #8a887a #fff">OSNAP</div><div class="sbtn" style="left:453px;width:49px;border-color:#fff #8a887a #8a887a #fff">OTRACK</div><div class="sbtn" style="left:506px;width:27px;border-color:#fff #8a887a #8a887a #fff">LWT</div><div class="sbtn" style="left:537px;width:43px;border-color:#404040 #fff #fff #404040">MODEL</div>
<svg class="a" style="left:960px;top:710px" width="60" height="20" viewBox="960 710 60 20">
<rect x="964.500" y="711.500" width="21" height="17" fill="#f2f0e4" stroke="#fff"/>
<path d="M969 724l6-9 2 1-5 9z" fill="#8a98a8" stroke="#556"/><circle cx="973" cy="717" r="3" fill="#b8c4d0" stroke="#667"/>
<path d="M978 726l4.500-8 4.500 8z" fill="#f8e020" stroke="#333" stroke-width="0.800"/><path d="M982.500 721v3" stroke="#000"/>
<path d="M993 719h7l-3.500 4z" fill="#000"/>
<g fill="#b8b5a5"><rect x="1014" y="718" width="2" height="2"/><rect x="1010" y="722" width="2" height="2"/><rect x="1014" y="722" width="2" height="2"/><rect x="1006" y="726" width="2" height="2"/><rect x="1010" y="726" width="2" height="2"/><rect x="1014" y="726" width="2" height="2"/></g>
</svg>
<!-- window border -->
<div class="a" style="left:1020px;top:32px;width:4px;height:701px;background:#0a48d8;border-left:1px solid #0831b0"></div>
<div class="a" style="left:0;top:730px;width:1024px;height:3px;background:#0a48d8;border-top:1px solid #0a1a80"></div>
<!-- WordPerfect underneath -->
<div class="a" style="left:0;top:733px;width:1024px;height:15px;background:#f4f3ec"></div>
<div class="a" style="left:1px;top:734px;width:17px;height:13px;background:#ECE9D8;border:1px solid;border-color:#fff #8a887a #8a887a #fff"></div>
<svg class="a" style="left:0;top:733px" width="20" height="15"><path d="M11 4v7l-5-3.500z" fill="#b0ad9d"/></svg>
<div class="a" style="left:988px;top:734px;width:16px;height:14px;background:#ECE9D8;border:1px solid;border-color:#fff #8a887a #8a887a #fff"></div>
<svg class="a" style="left:988px;top:734px" width="16" height="14"><path d="M6 3.500v7l5-3.500z" fill="#b0ad9d"/></svg>
<div class="a" style="left:1004px;top:733px;width:20px;height:15px;background:#ECE9D8"></div>
<div class="a" style="left:0;top:748px;width:1024px;height:20px;background:#ECE9D8"></div>
<div class="a" style="left:0;top:750px;width:158px;height:16px;border:1px solid;border-color:#9d9a8a #fff #fff #9d9a8a"><span class="a" style="left:2px;top:1px;font-size:11px;line-height:13px;font-weight:bold;white-space:nowrap;letter-spacing:0.500px">(CNM)TUTORIAL.wpd</span></div>
<div class="a" style="left:855px;top:751px;width:1px;height:15px;background:#aca899;border-right:1px solid #fff;width:2px"></div>
<span class="a" style="left:748px;top:753px;font-size:11px;line-height:13px">Insert</span>
<span class="a" style="left:865px;top:753px;font-size:11px;line-height:13px;white-space:nowrap">Pg 7 Ln 3.7" Pos 5.25"</span>
<svg class="a" style="left:655px;top:749px" width="90" height="18" viewBox="655 749 90 18">
<path d="M660.500 751.500h9l2 2v11h-11z" fill="#fff" stroke="#222"/><path d="M663 755h6M663 757h6M663 759h4" stroke="#555"/><path d="M668 760l3 3" stroke="#2a8a2a" stroke-width="2"/><path d="M668 765h5" stroke="#2040c0" stroke-width="1.500"/>
<rect x="678.500" y="750.500" width="16" height="16" fill="#f4f2e8" stroke="#8a887a"/>
<path d="M683.500 753v12M681 753h5M681 765h5" stroke="#000" stroke-width="1.300"/><path d="M688 753l5 6-3 0 1 4-2-3-2 1z" fill="#1c3470"/>
<text x="696" y="764" font-size="12" font-weight="bold" font-family="Liberation Sans" fill="#000">AB</text>
<path d="M721 753h8l2 4h-12z" fill="#fff" stroke="#222"/><path d="M717.500 757.500h15v6h-15z" fill="#e8e8e8" stroke="#222"/><path d="M720 760h10M720 762h10" stroke="#222"/><path d="M720 763.500h10v2h-10z" fill="#fff" stroke="#222"/>
</svg>
<div class="a" style="left:0;top:766px;width:1024px;height:2px;background:#7aa4e8"></div>
<svg class="a" style="left:1006px;top:750px" width="18" height="16"><g fill="#c8c5b5"><rect x="0" y="0" width="24" height="16" fill="#dddbd0"/></g></svg>

</body></html>
